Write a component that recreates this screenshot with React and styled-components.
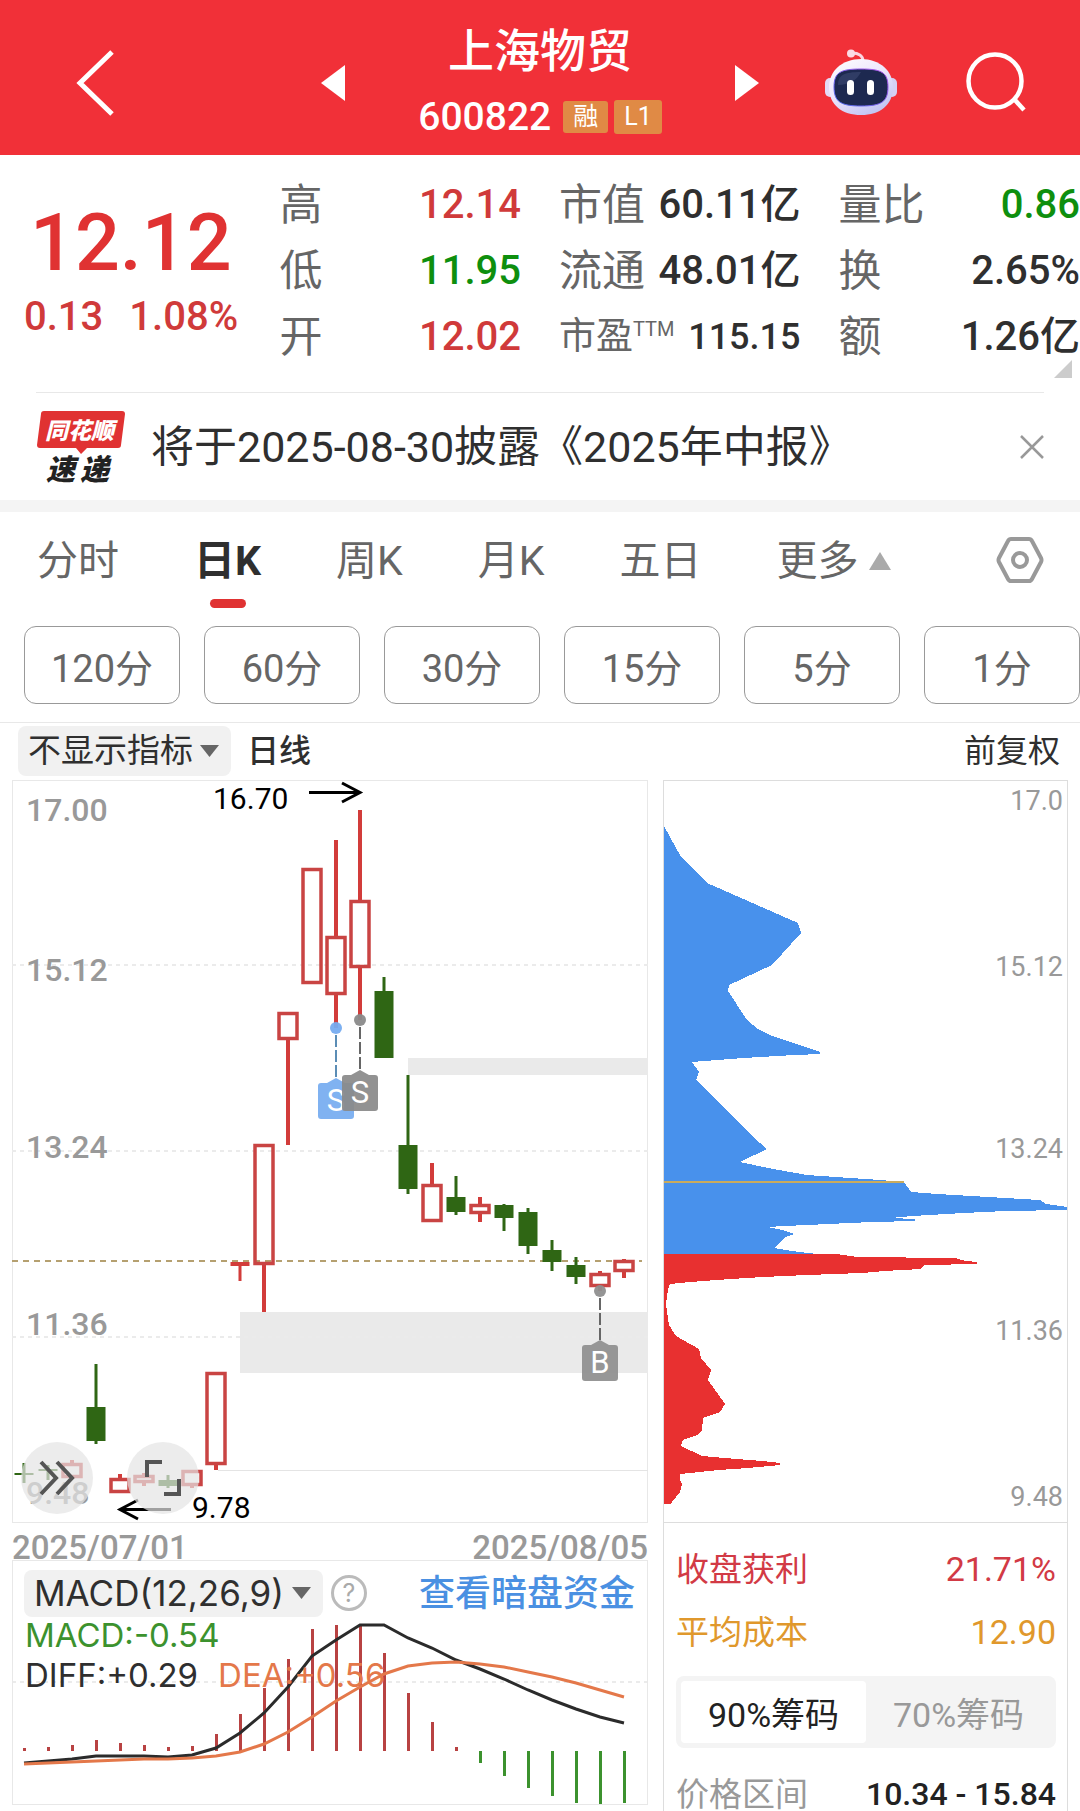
import React, { useState } from 'react';
import styled, { createGlobalStyle, css } from 'styled-components';

const RED = '#e03232';
const GREEN = '#0e8f0e';
const INK = '#2f2f2f';
const GREY = '#666';
const PALE = '#999';
const LINE = '#e8e8e8';

const GlobalStyle = createGlobalStyle`
  *, *::before, *::after { box-sizing: border-box; }
  body {
    margin: 0;
    background: #fff;
    color: ${INK};
    font-family: Roboto, "Noto Sans CJK SC", "Noto Sans", sans-serif;
    overflow-x: hidden;
  }
  button, select { font-family: inherit; color: inherit; }
  dl, dd, h1, p { margin: 0; }
`;

const plainButton = css`
  display: flex;
  align-items: center;
  justify-content: center;
  padding: 0;
  border: 0;
  background: none;
  cursor: pointer;
`;

/* ---------- header ---------- */

const Header = styled.header`
  display: grid;
  grid-template-columns: 1fr auto 1fr;
  align-items: center;
  height: 155px;
  padding: 10px 52px 0 72px;
  background: #f13038;
  color: #fff;
`;

const IconButton = styled.button`
  ${plainButton}
  svg { display: block; }
`;

const Stock = styled.div`
  display: flex;
  align-items: center;
  justify-content: space-between;
  width: 438px;
  margin-left: 20px;
  margin-right: 40px;
`;

const StockName = styled.div`
  display: flex;
  flex-direction: column;
  align-items: center;
  gap: 3px;
`;

const Title = styled.h1`
  font-size: 46px;
  line-height: 66px;
  font-weight: 500;
`;

const CodeRow = styled.div`
  display: flex;
  align-items: center;
  gap: 6px;
  font-size: 39px;
  line-height: 60px;
  font-weight: 500;
`;

const Badge = styled.span`
  padding: 0 10px;
  border-radius: 3px;
  background: #e08a45;
  font-size: 25px;
  line-height: 32px;
  font-weight: 400;
  &:first-of-type { margin-left: 6px; }
  &:last-of-type { padding: 1px 10px; }
`;

const HeaderActions = styled.div`
  display: flex;
  justify-content: flex-end;
  align-items: center;
  gap: 68px;
`;

/* ---------- quote ---------- */

const Quote = styled.section`
  position: relative;
  display: grid;
  grid-template-columns: repeat(4, minmax(0, 1fr));
  column-gap: 38px;
  height: 237px;
  padding-top: 17px;
`;

const PriceBlock = styled.div`
  padding: 26px 0 0 24px;
  color: ${RED};
  white-space: nowrap;
`;

const Price = styled.p`
  padding-left: 6px;
  font-size: 79px;
  line-height: 90px;
  font-weight: 500;
`;

const Change = styled.p`
  display: flex;
  gap: 26px;
  font-size: 40px;
  line-height: 58px;
  font-weight: 500;
  color: #d03a3a;
`;

const Figures = styled.dl`
  display: flex;
  flex-direction: column;
`;

const Figure = styled.div`
  display: flex;
  justify-content: space-between;
  align-items: center;
  height: 66px;
  line-height: 66px;
  font-size: ${(p) => (p.$small ? 37 : 43)}px;
  color: ${GREY};
  white-space: nowrap;
  dd {
    font-size: ${(p) => (p.$small ? 36 : 40)}px;
    font-weight: 500;
    color: ${(p) => p.$tone || INK};
  }
  dt { display: flex; }
  sup {
    font-size: 20px;
    line-height: 50px;
    vertical-align: top;
  }
`;

const Corner = styled.span`
  position: absolute;
  right: 8px;
  bottom: 14px;
  border-left: 18px solid transparent;
  border-bottom: 18px solid #ccc;
`;

/* ---------- news ---------- */

const News = styled.section`
  display: flex;
  align-items: center;
  height: 108px;
  margin: 0 36px;
  border-top: 1px solid ${LINE};
`;

const NewsLink = styled.a`
  flex: 1;
  margin-left: 24px;
  font-size: 43px;
  line-height: 60px;
  color: ${INK};
  text-decoration: none;
  white-space: nowrap;
`;

const Band = styled.div`
  height: 12px;
  background: #f4f4f4;
`;

/* ---------- period tabs ---------- */

const Tabs = styled.nav`
  display: flex;
  align-items: stretch;
  gap: 75px;
  height: 96px;
  padding: 0 36px 0 37px;
`;

const Tab = styled.button`
  ${plainButton}
  position: relative;
  gap: 10px;
  padding-top: 2px;
  font-size: 41px;
  line-height: 60px;
  color: ${(p) => (p.$active ? INK : GREY)};
  font-weight: ${(p) => (p.$active ? 700 : 400)};
  white-space: nowrap;
  &::after {
    content: "";
    display: ${(p) => (p.$active ? 'block' : 'none')};
    position: absolute;
    left: 50%;
    bottom: 0;
    width: 36px;
    height: 9px;
    margin-left: -18px;
    border-radius: 5px;
    background: ${RED};
  }
`;

const SettingsButton = styled(IconButton)`
  margin-left: auto;
`;

const Minutes = styled.div`
  display: grid;
  grid-template-columns: repeat(6, minmax(0, 1fr));
  gap: 24px;
  padding: 18px 0 18px 24px;
  border-bottom: 1px solid ${LINE};
`;

const MinuteButton = styled.button`
  ${plainButton}
  height: 78px;
  border: 1px solid ${PALE};
  border-radius: 12px;
  font-size: 38px;
  color: ${GREY};
`;

/* ---------- chart toolbar ---------- */

const Toolbar = styled.div`
  display: flex;
  align-items: center;
  gap: 16px;
  height: 57px;
  padding: 0 20px 2px 18px;
  font-size: 32px;
  line-height: 48px;
  span:last-child { margin-left: auto; }
  strong { font-weight: 500; }
`;

const Picker = styled.label`
  position: relative;
  display: block;
  select {
    display: block;
    appearance: none;
    height: ${(p) => p.$height}px;
    padding: 0 38px 0 ${(p) => p.$inset}px;
    border: 0;
    border-radius: 8px;
    background: #f1f1f1;
    font-size: ${(p) => p.$size}px;
    color: ${INK};
  }
  svg {
    position: absolute;
    right: 12px;
    top: 50%;
    margin-top: -6px;
    pointer-events: none;
  }
`;

/* ---------- panels ---------- */

const Panels = styled.main`
  display: grid;
  grid-template-columns: minmax(0, 636fr) minmax(0, 405fr);
  column-gap: 15px;
  align-items: start;
  padding: 0 12px;
`;

const Stack = styled.div`
  position: relative;
  border: 1px solid ${LINE};
  > svg { display: block; width: 100%; height: auto; overflow: visible; }
`;

const RoundTools = styled.div`
  position: absolute;
  left: 8px;
  bottom: 8px;
  display: flex;
  gap: 34px;
`;

const RoundButton = styled.button`
  ${plainButton}
  width: 72px;
  height: 72px;
  border-radius: 50%;
  background: rgba(228, 228, 228, 0.7);
`;

const Dates = styled.div`
  display: flex;
  justify-content: space-between;
  height: 37px;
  font-size: 33px;
  line-height: 50px;
  font-weight: 500;
  color: ${PALE};
`;

const MacdPanel = styled.div`
  display: grid;
  border: 1px solid ${LINE};
  > * { grid-area: 1 / 1; }
  > svg { display: block; width: 100%; height: auto; }
`;

const MacdInfo = styled.div`
  z-index: 1;
  padding: 10px 12px 0 11px;
  font-family: Inter, "Noto Sans CJK SC", sans-serif;
  font-size: 33px;
  line-height: 40px;
  p { padding-left: 1px; }
  span { margin-right: 20px; }
`;

const MacdBar = styled.div`
  display: flex;
  align-items: center;
  gap: 8px;
  height: 44px;
`;

const HelpButton = styled.button`
  ${plainButton}
  width: 36px;
  height: 36px;
  border: 3px solid #bbb;
  border-radius: 50%;
  font-size: 25px;
  line-height: 30px;
  color: #aaa;
`;

const FundLink = styled.a`
  margin-left: auto;
  font-size: 36px;
  font-weight: 500;
  color: #4a90e2;
  text-decoration: none;
`;

const Tone = styled.span`
  color: ${(p) => p.$tone};
`;

const ChipPanel = styled.aside`
  border: 1px solid #ddd;
  border-bottom: 0;
  > svg { display: block; width: 100%; height: auto; border-bottom: 1px solid #ddd; }
`;

const ChipStats = styled.div`
  display: flex;
  flex-direction: column;
  padding: 15px 11px 0 12px;
`;

const ChipRow = styled.div`
  display: flex;
  justify-content: space-between;
  font-size: 33px;
  height: 63px;
  line-height: 63px;
  color: ${(p) => p.$tone};
  white-space: nowrap;
  span:last-child { font-size: 34px; }
  strong { font-weight: 500; font-size: 32px; color: #222; }
`;

const Toggle = styled.div`
  display: grid;
  grid-template-columns: 1fr 1fr;
  height: 72px;
  margin: 12px 0 15px;
  padding: 5px;
  border-radius: 8px;
  background: #f4f4f4;
`;

const ToggleButton = styled.button`
  ${plainButton}
  border-radius: 4px;
  background: ${(p) => (p.$active ? '#fff' : 'transparent')};
  color: ${(p) => (p.$active ? '#222' : PALE)};
  font-size: 34px;
`;

/* ---------- drawings ---------- */

const Robot = () => (
  <svg width="74" height="68" viewBox="0 0 74 68" aria-hidden="true">
    <defs>
      <linearGradient id="shell" x1="0" y1="0" x2="0.6" y2="1">
        <stop offset="0" stopColor="#fff" />
        <stop offset="0.55" stopColor="#ece4fb" />
        <stop offset="1" stopColor="#c3c6f4" />
      </linearGradient>
      <linearGradient id="rim" x1="0" y1="1" x2="1" y2="0">
        <stop offset="0" stopColor="#4a6cf0" />
        <stop offset="1" stopColor="#b050e8" />
      </linearGradient>
    </defs>
    <path d="M39 12 C39 7 35 4 28 4" fill="none" stroke="#fbd5e2" strokeWidth="3" />
    <circle cx="27" cy="4.500" r="4" fill="#fbdbe6" />
    <rect x="1" y="29" width="10" height="19" rx="5" fill="#e4daf6" />
    <rect x="63" y="29" width="10" height="19" rx="5" fill="#d5d0f4" />
    <path d="M37 10 C56 10 69 22 69 38 C69 56 56 66 37 66 C18 66 5 56 5 38 C5 22 18 10 37 10Z" fill="url(#shell)" />
    <path d="M37 20 C57 20 64 23 64 38 C64 53 57 57 37 57 C17 57 10 53 10 38 C10 23 17 20 37 20Z" fill="#1d2950" stroke="url(#rim)" strokeWidth="1" />
    <path d="M14 36 C14 26 20 23 37 23 C33 31 25 36 14 36Z" fill="#43507a" opacity="0.5" />
    <rect x="23" y="31" width="7" height="15" rx="3.500" fill="#fff" />
    <rect x="43" y="31" width="7" height="15" rx="3.500" fill="#fff" />
  </svg>
);

const Caret = ({ up, color = GREY, width = 19, height = 12 }) => (
  <svg width={width} height={height} viewBox="0 0 20 14" preserveAspectRatio="none" aria-hidden="true">
    <path d={up ? 'M10 0 L20 14 H0Z' : 'M0 0 H20 L10 14Z'} fill={color} />
  </svg>
);

const NewsLogo = () => (
  <svg width="91" height="84" viewBox="36 404 91 84" role="img" aria-label="同花顺速递">
    <path d="M44 410 H122 Q125 410 125 413 L121 444 Q121 447 118 447 H87 L81 453 L76 447 H40 Q37 447 37 444 L41 413 Q41 410 44 410Z" fill={RED} />
    <text x="45" y="438" fontSize="23" fontWeight="900" fontStyle="italic" fill="#fff">同花顺</text>
    <text x="46" y="479" fontSize="29" fontWeight="900" fontStyle="italic" fill="#222">速</text>
    <text x="80" y="479" fontSize="29" fontWeight="900" fontStyle="italic" fill="#222">递</text>
  </svg>
);

/* kind, high, body top, body bottom, low — plot coordinates, one every 24 units */
const CANDLES = [
  ['down', 1463, 1473, 1475, 1483],
  ['down', 1465, 1469, 1471, 1480],
  ['up', 1460, 1463, 1478, 1478],
  ['down', 1364, 1407, 1441, 1444],
  ['up', 1474, 1478, 1493, 1493],
  ['up', 1473, 1475, 1483, 1486],
  ['down', 1475, 1480, 1486, 1488],
  ['up', 1470, 1470, 1486, 1488],
  ['up', 1372, 1372, 1465, 1470],
  ['flat', 1262, 1262, 1266, 1281],
  ['up', 1144, 1144, 1265, 1312],
  ['up', 1012, 1012, 1040, 1145],
  ['up', 868, 868, 984, 984],
  ['up', 840, 936, 995, 1028],
  ['up', 810, 900, 968, 1020],
  ['down', 977, 991, 1058, 1058],
  ['down', 1075, 1145, 1189, 1194],
  ['up', 1163, 1184, 1222, 1222],
  ['down', 1176, 1197, 1212, 1215],
  ['up', 1197, 1204, 1214, 1222],
  ['down', 1204, 1205, 1218, 1231],
  ['down', 1208, 1212, 1246, 1254],
  ['down', 1240, 1250, 1262, 1271],
  ['down', 1257, 1265, 1277, 1284],
  ['up', 1271, 1273, 1287, 1291],
  ['up', 1259, 1260, 1272, 1278],
];

const Candle = ({ x, data: [kind, high, top, bottom, low] }) => {
  if (kind === 'up') {
    return (
      <g stroke="#d23c3a" fill="none">
        <path d={`M${x} ${high}V${top + 2}M${x} ${bottom - 2}V${low}`} strokeWidth="4" />
        <rect x={x - 9} y={top + 1.5} width="18" height={bottom - top - 3} stroke="#c94443" strokeWidth="3.500" />
      </g>
    );
  }
  const color = kind === 'down' ? '#2f6614' : '#d23c3a';
  return (
    <g fill={color}>
      <rect x={x - 1.5} y={high} width="3" height={low - high} />
      <rect x={x - 9.5} y={top} width="19" height={bottom - top} />
    </g>
  );
};

const Marker = ({ x, from, y, color, line, letter }) => (
  <g>
    <circle cx={x} cy={from} r="6" fill={color} opacity="0.95" />
    <path d={`M${x} ${from + 7}V${y}`} stroke={line} strokeWidth="2" strokeDasharray="12 3" />
    <path
      d={`M${x - 9} ${y + 5} L${x} ${y} L${x + 9} ${y + 5} H${x + 15} q3 0 3 3 v30 q0 3 -3 3 H${x - 15} q-3 0 -3 -3 v-30 q0 -3 3 -3Z`}
      fill={color}
      opacity="0.93"
    />
    <text x={x} y={y + 33} fontSize="31" textAnchor="middle" fill="#fff">{letter}</text>
  </g>
);

const KLineChart = () => (
  <svg viewBox="13 781 634 741" role="img" aria-label="日K线图">
    <rect x="408" y="1058" width="240" height="17" fill="#eaeaea" />
    <rect x="240" y="1312" width="408" height="61" fill="#eaeaea" />
    <path d="M12 965H648M12 1151H648M12 1337H648" stroke="#ebebeb" strokeWidth="2" strokeDasharray="4 4" />
    <path d="M218 1470.500H648" stroke="#e4e4e4" />
    <g fontSize="32" fontWeight="500" fill={PALE}>
      <text x="26" y="821">17.00</text>
      <text x="26" y="981">15.12</text>
      <text x="26" y="1158">13.24</text>
      <text x="26" y="1335">11.36</text>
      <text x="26" y="1504">9.48</text>
    </g>
    <path d="M12 1261H642" stroke="#b5a070" strokeWidth="2" strokeDasharray="6 5" />
    {CANDLES.map((data, i) => <Candle key={i} x={24 + i * 24} data={data} />)}
    <Marker x={336} from={1028} y={1078} color="#76acf0" line="#5b8db5" letter="S" />
    <Marker x={360} from={1020} y={1070} color="#8a8a8a" line="#666" letter="S" />
    <Marker x={600} from={1291} y={1340} color="#8f8f8f" line="#666" letter="B" />
    <g fill="none" stroke="#000" strokeWidth="3">
      <path d="M309 792.500H360M342 783L360 792.500L342 802" />
      <path d="M171 1509.500H120M138 1500L120 1509.500L138 1519" />
    </g>
    <g fontSize="30" fill="#000">
      <text x="213" y="809">16.70</text>
      <text x="192" y="1518">9.78</text>
    </g>
  </svg>
);

const BARS = [1748, 1747, 1745, 1740, 1743, 1745, 1747, 1746, 1734, 1714, 1688, 1659, 1629, 1625, 1625, 1653, 1693, 1722, 1747, 1763, 1776, 1788, 1796, 1803, 1804, 1803];
const DIFF = [1763, 1761, 1759, 1756, 1756, 1756, 1757, 1755, 1748, 1733, 1713, 1687, 1656, 1640, 1625, 1625, 1638, 1648, 1660, 1669, 1679, 1690, 1700, 1709, 1717, 1723];
const DEA = [1764, 1763, 1762, 1761, 1760, 1759, 1759, 1758, 1756, 1752, 1744, 1732, 1717, 1701, 1687, 1674, 1666, 1663, 1662, 1664, 1667, 1672, 1677, 1683, 1690, 1697];
const ZERO = 1751;

const points = (values) => values.map((y, i) => `${24 + i * 24},${y}`).join(' ');

const MacdChart = () => (
  <svg viewBox="13 1561 634 243" role="img" aria-label="MACD">
    <path d="M12 1682H648" stroke="#ebebeb" strokeWidth="2" strokeDasharray="4 4" />
    {BARS.map((y, i) => (
      <rect
        key={i}
        x={23 + i * 24}
        y={Math.min(y, ZERO)}
        width="3"
        height={Math.abs(y - ZERO)}
        fill={y < ZERO ? '#b84242' : '#3c922e'}
      />
    ))}
    <polyline points={points(DIFF)} fill="none" stroke="#2b2b2b" strokeWidth="3" />
    <polyline points={points(DEA)} fill="none" stroke="#e4784a" strokeWidth="3" />
  </svg>
);

const HELD_ABOVE = '664,826 681,857 707,883 798,923 801,933 772,965 729,985 728,991 747,1020 758,1029 770,1035 820,1052 820,1054 795,1055 743,1058 692,1062 699,1072 696,1080 760,1143 767,1149 740,1162 768,1168 807,1175 880,1180 904,1182 911,1192 937,1194 1005,1198 1040,1200 1046,1204 1067,1207 1067,1210 1005,1211 963,1213 912,1216 890,1218 915,1219 915,1221 872,1222 785,1226 767,1227 782,1230 795,1234 785,1237 774,1248 792,1251 817,1254 664,1254';
const HELD_BELOW = '664,1254 837,1254 857,1257 955,1258 966,1261 977,1262 977,1264 924,1265 921,1269 884,1271 862,1273 807,1275 763,1277 731,1279 690,1282 670,1284 668,1290 666,1304 669,1325 676,1336 699,1349 701,1358 711,1370 708,1380 725,1404 720,1412 703,1418 702,1430 697,1435 683,1440 681,1446 702,1456 737,1459 762,1461 780,1463 780,1465 748,1468 719,1470 680,1474 680,1480 682,1484 680,1492 672,1502 671,1504 664,1504';

const ChipChart = () => (
  <svg viewBox="664 781 403 741" role="img" aria-label="筹码分布">
    <g fontSize="27" fill={PALE} textAnchor="end">
      <text x="1063" y="810">17.0</text>
      <text x="1063" y="976">15.12</text>
      <text x="1063" y="1158">13.24</text>
      <text x="1063" y="1340">11.36</text>
      <text x="1063" y="1506">9.48</text>
    </g>
    <g shapeRendering="crispEdges">
      <polygon points={HELD_ABOVE} fill="#4891ec" />
      <polygon points={HELD_BELOW} fill="#e83030" />
      <rect x="664" y="1181" width="240" height="2" fill="#c9ab5e" />
    </g>
  </svg>
);

/* ---------- page ---------- */

const COLUMNS = [
  [['高', '12.14', '#d03a3a'], ['低', '11.95', GREEN], ['开', '12.02', '#d03a3a']],
  [['市值', '60.11亿'], ['流通', '48.01亿'], ['市盈', '115.15', INK, 'TTM']],
  [['量比', '0.86', GREEN], ['换', '2.65%'], ['额', '1.26亿']],
];
const PERIODS = ['分时', '日K', '周K', '月K', '五日', '更多'];
const MINUTES = ['120分', '60分', '30分', '15分', '5分', '1分'];

export default function App() {
  const [period, setPeriod] = useState('日K');
  const [range, setRange] = useState('90%筹码');

  return (
    <>
      <GlobalStyle />
      <Header>
        <IconButton aria-label="返回" style={{ justifySelf: 'start' }}>
          <svg width="44" height="70" viewBox="0 0 44 70">
            <path d="M40 4 L8 35 L40 66" fill="none" stroke="#fff" strokeWidth="5" />
          </svg>
        </IconButton>
        <Stock>
          <IconButton aria-label="上一只">
            <svg width="24" height="36" viewBox="0 0 24 36"><path d="M24 0V36L0 18Z" fill="#fff" /></svg>
          </IconButton>
          <StockName>
            <Title>上海物贸</Title>
            <CodeRow>
              600822
              <Badge>融</Badge>
              <Badge>L1</Badge>
            </CodeRow>
          </StockName>
          <IconButton aria-label="下一只">
            <svg width="24" height="36" viewBox="0 0 24 36"><path d="M0 0V36L24 18Z" fill="#fff" /></svg>
          </IconButton>
        </Stock>
        <HeaderActions>
          <IconButton aria-label="智能助手"><Robot /></IconButton>
          <IconButton aria-label="搜索">
            <svg width="62" height="62" viewBox="0 0 62 62">
              <circle cx="29" cy="29" r="26.500" fill="none" stroke="#fff" strokeWidth="4.500" />
              <path d="M48 47 L58 58" stroke="#fff" strokeWidth="4.500" />
            </svg>
          </IconButton>
        </HeaderActions>
      </Header>

      <Quote>
        <PriceBlock>
          <Price>12.12</Price>
          <Change><span>0.13</span><span>1.08%</span></Change>
        </PriceBlock>
        {COLUMNS.map((column, i) => (
          <Figures key={i}>
            {column.map(([label, value, tone, note]) => (
              <Figure key={label} $tone={tone} $small={Boolean(note)}>
                <dt>{label}{note && <sup>{note}</sup>}</dt>
                <dd>{value}</dd>
              </Figure>
            ))}
          </Figures>
        ))}
        <Corner />
      </Quote>

      <News>
        <NewsLogo />
        <NewsLink href="#report">将于2025-08-30披露《2025年中报》</NewsLink>
        <IconButton aria-label="关闭">
          <svg width="24" height="24" viewBox="0 0 24 24">
            <path d="M1 1L23 23M23 1L1 23" stroke={PALE} strokeWidth="2.500" />
          </svg>
        </IconButton>
      </News>
      <Band />

      <Tabs>
        {PERIODS.map((name) => (
          <Tab key={name} $active={name === period} onClick={() => setPeriod(name)}>
            {name}
            {name === '更多' && <Caret up color="#aaa" width={22} height={18} />}
          </Tab>
        ))}
        <SettingsButton aria-label="设置">
          <svg width="48" height="48" viewBox="0 0 48 48" fill="none" stroke={PALE} strokeWidth="4">
            <path d="M15 3 H33 Q35 3 36 5 L45 22 Q46 24 45 26 L36 43 Q35 45 33 45 H15 Q13 45 12 43 L3 26 Q2 24 3 22 L12 5 Q13 3 15 3Z" />
            <circle cx="24" cy="24" r="7" />
          </svg>
        </SettingsButton>
      </Tabs>

      <Minutes>
        {MINUTES.map((name) => <MinuteButton key={name}>{name}</MinuteButton>)}
      </Minutes>

      <Toolbar>
        <Picker $height={50} $inset={10} $size={33}>
          <select aria-label="主图指标"><option>不显示指标</option></select>
          <Caret />
        </Picker>
        <strong>日线</strong>
        <span>前复权</span>
      </Toolbar>

      <Panels>
        <div>
          <Stack>
            <KLineChart />
            <RoundTools>
              <RoundButton aria-label="展开">
                <svg width="40" height="36" viewBox="0 0 40 36" fill="none" stroke="#555" strokeWidth="4">
                  <path d="M4 2L19 18L4 34M20 2L35 18L20 34" />
                </svg>
              </RoundButton>
              <RoundButton aria-label="全屏">
                <svg width="38" height="38" viewBox="0 0 38 38" fill="none" stroke="#555" strokeWidth="4">
                  <path d="M18 3H3V18M35 20V35H20" />
                </svg>
              </RoundButton>
            </RoundTools>
          </Stack>
          <Dates><span>2025/07/01</span><span>2025/08/05</span></Dates>
          <MacdPanel>
            <MacdChart />
            <MacdInfo>
              <MacdBar>
                <Picker $height={47} $inset={10} $size={35}>
                  <select aria-label="副图指标"><option>MACD(12,26,9)</option></select>
                  <Caret />
                </Picker>
                <HelpButton aria-label="说明">?</HelpButton>
                <FundLink href="#funds">查看暗盘资金</FundLink>
              </MacdBar>
              <p><Tone $tone="#3c922e">MACD:-0.54</Tone></p>
              <p><Tone $tone={INK}>DIFF:+0.29</Tone><Tone $tone="#e4784a">DEA:+0.56</Tone></p>
            </MacdInfo>
          </MacdPanel>
        </div>

        <ChipPanel>
          <ChipChart />
          <ChipStats>
            <ChipRow $tone="#d23a45"><span>收盘获利</span><span>21.71%</span></ChipRow>
            <ChipRow $tone="#e0982c"><span>平均成本</span><span>12.90</span></ChipRow>
            <Toggle>
              {['90%筹码', '70%筹码'].map((name) => (
                <ToggleButton key={name} $active={name === range} onClick={() => setRange(name)}>{name}</ToggleButton>
              ))}
            </Toggle>
            <ChipRow $tone={PALE}><span>价格区间</span><strong>10.34 - 15.84</strong></ChipRow>
          </ChipStats>
        </ChipPanel>
      </Panels>
    </>
  );
}
